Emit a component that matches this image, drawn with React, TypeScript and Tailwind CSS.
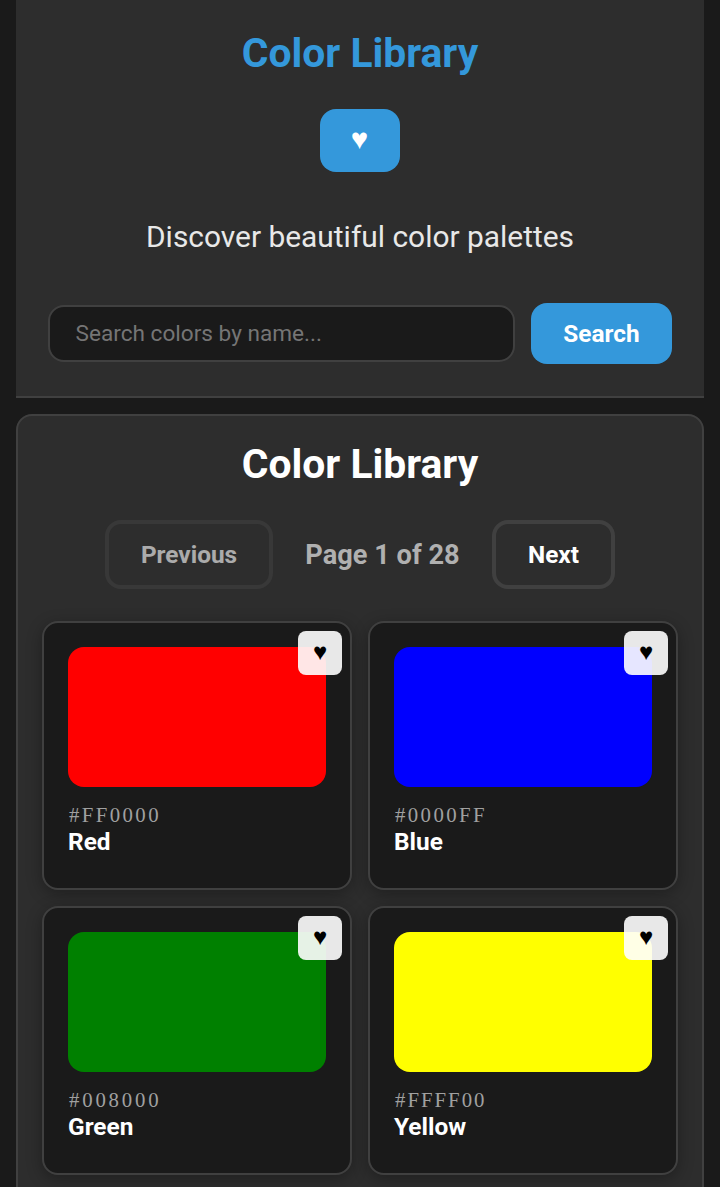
const colors = [
  { name: 'Red', hex: '#FF0000', swatch: 'bg-[#ff0000]', tracking: 'tracking-[2.4px]' },
  { name: 'Blue', hex: '#0000FF', swatch: 'bg-[#0000ff]', tracking: 'tracking-[2.4px]' },
  { name: 'Green', hex: '#008000', swatch: 'bg-[#008000]', tracking: 'tracking-[2.8px]' },
  { name: 'Yellow', hex: '#FFFF00', swatch: 'bg-[#ffff00]', tracking: 'tracking-[2px]' },
];

export default function App() {
  return (
    <div className="h-[1187px] overflow-hidden bg-[#1a1a1a] px-4 font-[Roboto,sans-serif] text-white">
      <header className="flex h-[398px] flex-col items-center border-b-2 border-[#404040] bg-[#2d2d2d] px-8">
        <h1 className="mt-[29px] text-[40.8px] leading-[48px] font-bold text-[#3498db]">Color Library</h1>
        <button className="mt-8 h-[63px] w-20 shrink-0 rounded-2xl bg-[#3498db] pr-px pb-1 text-[29.4px] leading-8 font-bold">♥</button>
        <p className="mt-[44px] text-[29.9px] leading-[42px] text-[#e8e8e8]">Discover beautiful color palettes</p>
        <div className="mt-[45px] flex w-full items-center gap-4">
          <input
            className="h-[57px] min-w-0 flex-1 rounded-2xl border-2 border-[#404040] bg-[#1a1a1a] px-[25.6px] text-[22.6px] placeholder:text-[#757575]"
            placeholder="Search colors by name..."
          />
          <button className="h-[61px] w-[141px] rounded-2xl bg-[#3498db] pt-0.5 text-[24.4px] font-bold">Search</button>
        </div>
      </header>
      <main className="mt-4 h-[900px] rounded-2xl border-2 border-[#404040] bg-[#2d2d2d] px-6">
        <h2 className="mt-6 text-center text-[40.8px] leading-[48px] font-bold">Color Library</h2>
        <nav className="mt-8 flex items-center justify-center gap-8">
          <button className="h-[69px] w-[168px] rounded-2xl border-4 border-[#404040] pt-0.5 text-[24.4px] font-bold opacity-60">Previous</button>
          <span className="w-[155px] pt-0.5 text-center text-[27.2px] font-bold whitespace-nowrap text-[#b0b0b0]">Page 1 of 28</span>
          <button className="h-[69px] w-[123px] rounded-2xl border-4 border-[#404040] pt-0.5 text-[24.4px] font-bold">Next</button>
        </nav>
        <div className="mt-8 grid grid-cols-2 gap-4">
          {colors.map((color) => (
            <article key={color.hex} className="relative h-[269px] rounded-2xl border-2 border-[#404040] bg-[#1a1a1a] p-6 shadow-[0_4px_16px_rgba(0,0,0,0.3)]">
              <div className={`h-[140px] rounded-2xl ${color.swatch}`} />
              <button className="absolute top-2 right-2 size-11 rounded-lg bg-white/90 pb-0.5 text-2xl text-black">♥</button>
              <p className={`mt-4 pl-px font-['Liberation_Serif',serif] text-[20.8px] leading-[23px] text-[#a0a0a0] ${color.tracking}`}>{color.hex}</p>
              <h3 className="mt-px text-[24.4px] leading-[29px] font-bold">{color.name}</h3>
            </article>
          ))}
        </div>
      </main>
    </div>
  );
}
